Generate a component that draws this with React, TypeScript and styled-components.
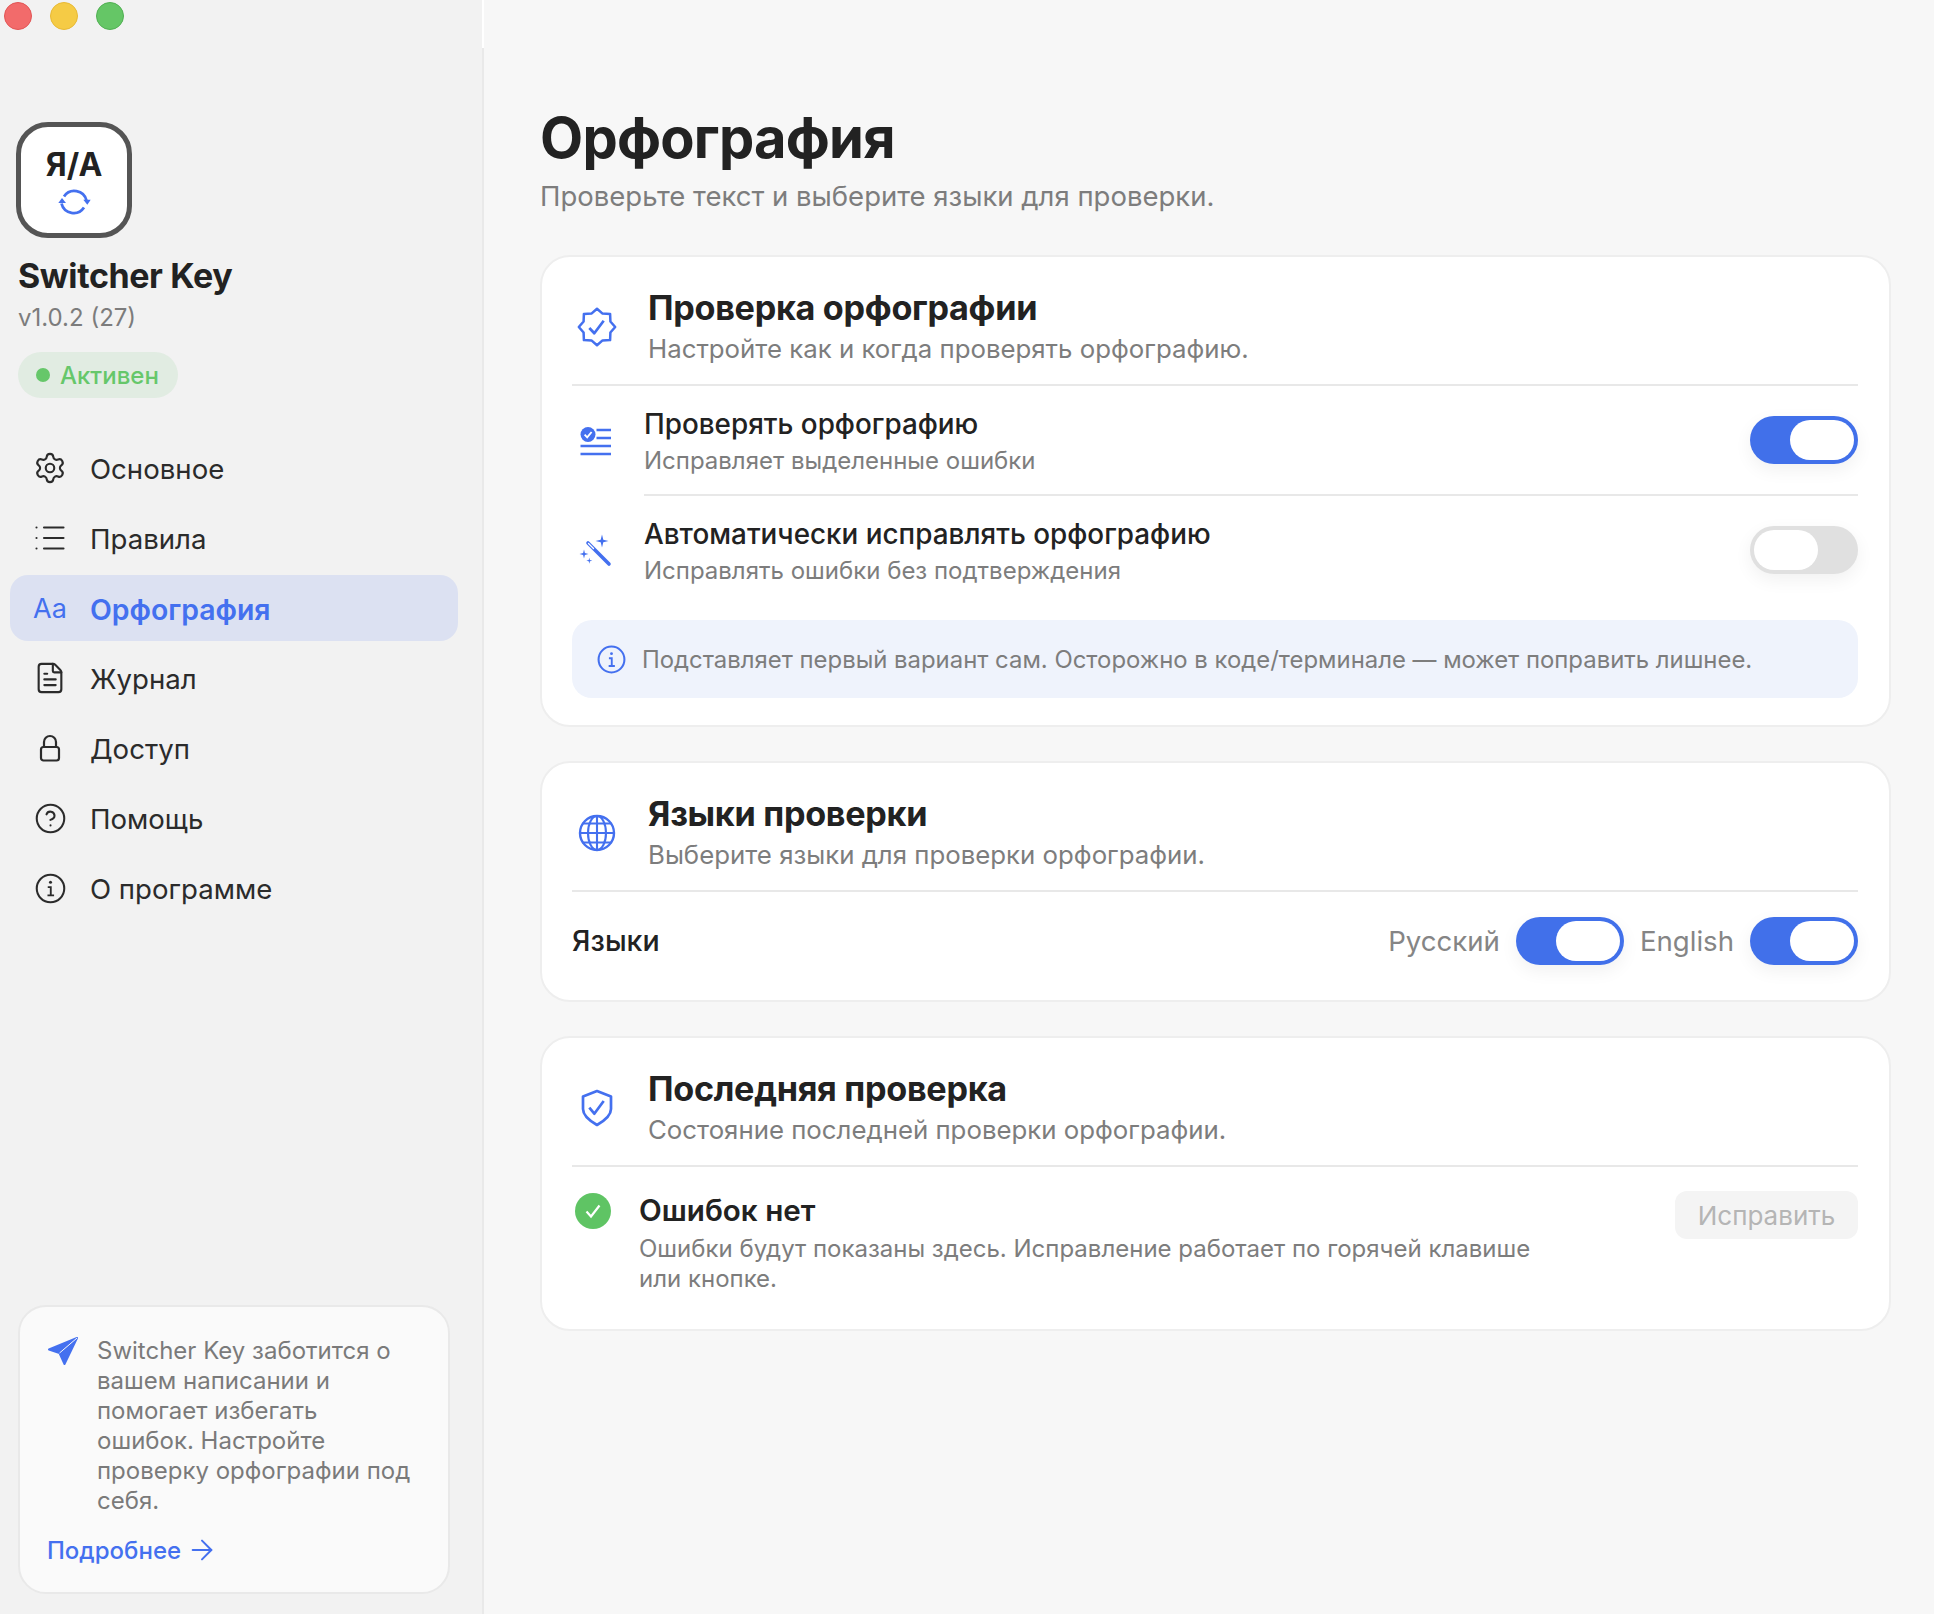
import { FC, ReactNode } from 'react'
import styled, { createGlobalStyle } from 'styled-components'
import { ArrowRight, CircleHelp, FileText, List, Settings } from 'lucide-react'

const BLUE = '#4470ef'
const FONT = 'Inter, "Noto Sans", "Liberation Sans", sans-serif'

const GlobalStyle = createGlobalStyle`
  html, body {
    margin: 0;
    padding: 0;
    background: #f7f7f7;
  }
  * {
    box-sizing: border-box;
  }
`

const SyncIcon = () => (
  <svg width="34" height="30" viewBox="0 0 34 30" fill="none">
    <path d="M7 9.500A12.500 12.500 0 0 1 29.500 13.500" stroke={BLUE} strokeWidth="2.8" />
    <path d="M27 20.500A12.500 12.500 0 0 1 4.500 16.500" stroke={BLUE} strokeWidth="2.8" />
    <path d="M33.700 12.700 30.300 17.700 26.300 12.700z" fill={BLUE} />
    <path d="M1.300 16 5 11 9 16z" fill={BLUE} />
  </svg>
)

const PlaneIcon = () => (
  <svg width="32" height="30" viewBox="0 0 32 30">
    <path
      d="M30 2 2 13.500 12.500 17 17.500 28z"
      fill={BLUE}
      stroke={BLUE}
      strokeWidth="2"
      strokeLinejoin="round"
    />
    <path d="M30 2 12.500 17" stroke="#fafafa" strokeWidth="1" />
  </svg>
)

const CheckListIcon = () => (
  <svg width="36" height="36" viewBox="0 0 36 36" fill="none">
    <circle cx="9" cy="11.500" r="7.500" fill={BLUE} />
    <path d="M5.600 11.700 8.200 14.300 12.600 9" stroke="#fff" strokeWidth="1.900" />
    <path d="M17.500 7H32M17.500 15H32M1.500 23H32M1.500 31H32" stroke={BLUE} strokeWidth="2.400" />
  </svg>
)

const WandIcon = () => (
  <svg width="36" height="36" viewBox="0 0 36 36" fill="none">
    <path d="M9 10 30 31" stroke={BLUE} strokeWidth="3.600" strokeLinecap="round" />
    <path d="M9.500 10.500 14.500 15.500" stroke="#fff" strokeWidth="1.300" strokeLinecap="round" />
    <path d="M23 1.500 24.300 6.700 29.500 8 24.300 9.300 23 14.500 21.700 9.300 16.500 8 21.700 6.700z" fill={BLUE} />
    <path d="M5 16.500 5.900 20.100 9.500 21 5.900 21.900 5 25.500 4.100 21.900.5 21 4.100 20.100z" fill={BLUE} />
    <path d="M10.300 24.700l.6 2.400 2.400.6-2.400.6-.6 2.400-.6-2.400-2.400-.6 2.400-.6z" fill={BLUE} />
  </svg>
)

const GlobeIcon = () => (
  <svg width="40" height="40" viewBox="0 0 40 40" fill="none" stroke={BLUE} strokeWidth="2.100">
    <circle cx="20" cy="20" r="17" strokeWidth="2.400" />
    <ellipse cx="20" cy="20" rx="9" ry="17" />
    <path d="M20 3v34M3 20h34M5.500 10.500h29M5.500 29.500h29" />
  </svg>
)

const BadgeIcon = () => (
  <svg width="40" height="40" viewBox="0 0 40 40" fill="none" stroke={BLUE} strokeWidth="2.500" strokeLinejoin="round">
    <path d="M20 1.800 25.550 6.600 33.100 6.900 33.400 14.450 38.200 20 33.400 25.550 33.100 33.100 25.550 33.400 20 38.200 14.450 33.400 6.900 33.100 6.600 25.550 1.800 20 6.600 14.450 6.900 6.900 14.450 6.600z" />
    <path d="M12.300 21 17.300 26.300 26.700 13.700" strokeWidth="2.700" />
  </svg>
)

const ShieldIcon = () => (
  <svg width="34" height="38" viewBox="0 0 34 38" fill="none" stroke={BLUE} strokeWidth="2.700" strokeLinejoin="round">
    <path d="M17 2 31 7.500V20C31 27 24 32 17 36 10 32 3 27 3 20V7.500z" />
    <path d="M9.300 18.700 14.300 24.700 23.700 12" />
  </svg>
)

const LockIcon = () => (
  <svg width="30" height="30" viewBox="0 0 30 30" fill="none" stroke="currentColor" strokeWidth="2.200">
    <rect x="6" y="14" width="18" height="13.500" rx="2.500" />
    <path d="M9 14V9a6 6 0 0 1 12 0v5" />
  </svg>
)

const InfoIcon: FC<{ size: number; strokeWidth?: number }> = ({ size, strokeWidth = 1.6 }) => (
  <svg width={size} height={size} viewBox="0 0 24 24" fill="none" stroke="currentColor" strokeWidth={strokeWidth}>
    <circle cx="12" cy="12" r="10" />
    <path d="M10 11h2.200v6M9.800 17h4.800" strokeWidth={strokeWidth * 0.9} />
    <circle cx="12" cy="7.500" r="1.100" fill="currentColor" stroke="none" />
  </svg>
)

const Switch: FC<{ on?: boolean }> = ({ on }) => (
  <Track $on={on}>
    <Knob />
  </Track>
)

const CardHeader: FC<{ icon: ReactNode; title: string; subtitle: string }> = ({
  icon,
  title,
  subtitle,
}) => (
  <HeaderRow>
    <IconSlot>{icon}</IconSlot>
    <div>
      <CardTitle>{title}</CardTitle>
      <Muted>{subtitle}</Muted>
    </div>
  </HeaderRow>
)

const App: FC = () => {
  const navItems = [
    { label: 'Основное', icon: <Settings size={34} strokeWidth={1.5} /> },
    { label: 'Правила', icon: <List size={36} strokeWidth={1.4} /> },
    { label: 'Орфография', icon: <AaMark>Aa</AaMark>, active: true },
    { label: 'Журнал', icon: <FileText size={34} strokeWidth={1.5} /> },
    { label: 'Доступ', icon: <LockIcon /> },
    { label: 'Помощь', icon: <CircleHelp size={33} strokeWidth={1.5} /> },
    { label: 'О программе', icon: <InfoIcon size={33} strokeWidth={1.5} /> },
  ]

  return (
    <>
      <GlobalStyle />
      <Layout>
        <Sidebar>
          <TrafficLights>
            <Light $color="#f26b6b" $edge="#e25555" />
            <Light $color="#f5cb45" $edge="#e8b934" />
            <Light $color="#65c666" $edge="#50b052" />
          </TrafficLights>
          <Brand>
            <AppIcon>
              <LogoText>Я/А</LogoText>
              <SyncIcon />
            </AppIcon>
            <AppName>Switcher Key</AppName>
            <Version>v1.0.2 (27)</Version>
            <StatusBadge>
              <StatusDot />
              Активен
            </StatusBadge>
          </Brand>
          <Nav>
            {navItems.map(item => (
              <NavItem key={item.label} $active={item.active}>
                <NavIcon>{item.icon}</NavIcon>
                {item.label}
              </NavItem>
            ))}
          </Nav>
          <Promo>
            <PlaneSlot>
              <PlaneIcon />
            </PlaneSlot>
            <div>
              <PromoText>
                Switcher Key заботится о вашем написании и помогает избегать
                ошибок. Настройте проверку орфографии под себя.
              </PromoText>
              <PromoLink>
                Подробнее <ArrowRight size={32} strokeWidth={1.5} />
              </PromoLink>
            </div>
          </Promo>
        </Sidebar>

        <Main>
          <PageTitle>Орфография</PageTitle>
          <PageSubtitle>Проверьте текст и выберите языки для проверки.</PageSubtitle>

          <Card>
            <CardHeader
              icon={<BadgeIcon />}
              title="Проверка орфографии"
              subtitle="Настройте как и когда проверять орфографию."
            />
            <SettingRow>
              <IconSlot>
                <CheckListIcon />
              </IconSlot>
              <SettingBody $divider>
                <SettingText>
                  <SettingTitle>Проверять орфографию</SettingTitle>
                  <SettingHint>Исправляет выделенные ошибки</SettingHint>
                </SettingText>
                <Switch on />
              </SettingBody>
            </SettingRow>
            <SettingRow>
              <IconSlot>
                <WandIcon />
              </IconSlot>
              <SettingBody>
                <SettingText>
                  <SettingTitle>Автоматически исправлять орфографию</SettingTitle>
                  <SettingHint>Исправлять ошибки без подтверждения</SettingHint>
                </SettingText>
                <Switch />
              </SettingBody>
            </SettingRow>
            <Notice>
              <NoticeIcon>
                <InfoIcon size={31} strokeWidth={1.6} />
              </NoticeIcon>
              Подставляет первый вариант сам. Осторожно в коде/терминале — может поправить лишнее.
            </Notice>
          </Card>

          <Card>
            <CardHeader
              icon={<GlobeIcon />}
              title="Языки проверки"
              subtitle="Выберите языки для проверки орфографии."
            />
            <LanguagesRow>
              <LanguagesLabel>Языки</LanguagesLabel>
              <LanguageToggles>
                <LanguageName>Русский</LanguageName>
                <Switch on />
                <LanguageName>English</LanguageName>
                <Switch on />
              </LanguageToggles>
            </LanguagesRow>
          </Card>

          <Card>
            <CardHeader
              icon={<ShieldIcon />}
              title="Последняя проверка"
              subtitle="Состояние последней проверки орфографии."
            />
            <ResultRow>
              <SuccessDot>
                <svg width="20" height="20" viewBox="0 0 20 20" fill="none">
                  <path d="M3.500 10.500 8 15.500 16.500 4.500" stroke="#fff" strokeWidth="2.200" />
                </svg>
              </SuccessDot>
              <ResultBody>
                <ResultTitle>Ошибок нет</ResultTitle>
                <SettingHint>
                  Ошибки будут показаны здесь. Исправление работает по горячей клавише
                  или кнопке.
                </SettingHint>
              </ResultBody>
              <FixButton>Исправить</FixButton>
            </ResultRow>
          </Card>
        </Main>
      </Layout>
    </>
  )
}

const Layout = styled('div')`
  display: flex;
  height: 1614px;
  overflow: hidden;
  font-family: ${FONT};
  color: #222;
`

const Sidebar = styled('aside')`
  position: relative;
  display: flex;
  flex-direction: column;
  width: 484px;
  flex-shrink: 0;
  background: #f2f2f2;
  border-right: 2px solid #e9e9e9;

  &::after {
    content: '';
    position: absolute;
    top: 0;
    right: -2px;
    width: 2px;
    height: 48px;
    background: #fff;
  }
`

const TrafficLights = styled('div')`
  display: flex;
  gap: 18px;
  padding: 2px 0 0 4px;
`

const Light = styled('span')<{ $color: string; $edge: string }>`
  width: 28px;
  height: 28px;
  border-radius: 50%;
  background: ${p => p.$color};
  border: 1px solid ${p => p.$edge};
`

const Brand = styled('div')`
  display: flex;
  flex-direction: column;
  align-items: flex-start;
  padding: 92px 0 0 18px;
`

const AppIcon = styled('div')`
  display: flex;
  flex-direction: column;
  align-items: center;
  width: 116px;
  height: 116px;
  margin-left: -2px;
  padding-top: 20px;
  background: #fff;
  border: 5px solid #555;
  border-radius: 32px;
`

const LogoText = styled('div')`
  font-size: 32px;
  line-height: 36px;
  font-weight: 700;
  color: #222;
  margin-bottom: 4px;
`

const AppName = styled('div')`
  margin-top: 18px;
  font-size: 34px;
  line-height: 40px;
  font-weight: 700;
  letter-spacing: -0.4px;
  color: #222;
`

const Version = styled('div')`
  margin-top: 7px;
  font-size: 24px;
  line-height: 30px;
  color: #7c7c7c;
`

const StatusBadge = styled('div')`
  display: flex;
  align-items: center;
  gap: 10px;
  height: 46px;
  margin-top: 19px;
  padding: 0 19px 0 18px;
  border-radius: 23px;
  background: #e1ece2;
  color: #66c76a;
  font-size: 24px;
  font-weight: 500;
`

const StatusDot = styled('span')`
  width: 14px;
  height: 14px;
  border-radius: 50%;
  background: #66c76a;
`

const Nav = styled('nav')`
  display: flex;
  flex-direction: column;
  gap: 4px;
  margin: 37px 24px 0 10px;
`

const NavItem = styled('div')<{ $active?: boolean }>`
  display: flex;
  align-items: center;
  gap: 20px;
  height: 66px;
  padding: 2px 0 0 20px;
  border-radius: 18px;
  font-size: ${p => (p.$active ? 28.4 : 27.6)}px;
  font-weight: ${p => (p.$active ? 600 : 400)};
  color: ${p => (p.$active ? BLUE : '#2b2b2b')};
  background: ${p => (p.$active ? '#dce1f2' : 'transparent')};
`

const NavIcon = styled('span')`
  display: flex;
  align-items: center;
  justify-content: center;
  width: 40px;
  margin-top: -2px;
`

const AaMark = styled('span')`
  font-size: 27px;
  font-weight: 400;
`

const Promo = styled('div')`
  display: flex;
  margin: auto 32px 20px 18px;
  padding: 29px 26px 27px 27px;
  background: #fafafa;
  border: 2px solid #e9e9e9;
  border-radius: 28px;
`

const PlaneSlot = styled('div')`
  width: 50px;
  flex-shrink: 0;
`

const PromoText = styled('div')`
  max-width: 322px;
  font-size: 24px;
  line-height: 30px;
  color: #7a7a7a;
`

const PromoLink = styled('a')`
  display: flex;
  align-items: center;
  gap: 5px;
  height: 30px;
  margin: 19px 0 0 -50px;
  font-size: 24px;
  font-weight: 500;
  color: ${BLUE};
`

const Main = styled('main')`
  flex: 1;
  min-width: 0;
  padding: 104px 43px 0 56px;
  background: #f7f7f7;
`

const PageTitle = styled('h1')`
  margin: 0;
  font-size: 56px;
  line-height: 68px;
  font-weight: 700;
  letter-spacing: -0.75px;
  color: #222;
`

const PageSubtitle = styled('div')`
  margin: 7px 0 42px;
  font-size: 27.5px;
  line-height: 34px;
  color: #7d7d7d;
`

const Card = styled('section')`
  margin-bottom: 34px;
  padding: 31px 31px 27px 30px;
  background: #fff;
  border: 2px solid #eee;
  border-radius: 30px;
`

const HeaderRow = styled('div')`
  display: flex;
  align-items: center;
  gap: 26px;
  padding-bottom: 18px;
  border-bottom: 2px solid #e8e8e8;
`

const IconSlot = styled('div')`
  display: flex;
  align-items: center;
  justify-content: center;
  width: 50px;
  flex-shrink: 0;
`

const CardTitle = styled('h2')`
  margin: 0 0 4px;
  font-size: 34.2px;
  line-height: 40px;
  font-weight: 700;
  letter-spacing: -0.3px;
  color: #222;
`

const Muted = styled('div')`
  font-size: 25.8px;
  line-height: 34px;
  color: #7d7d7d;
`

const SettingRow = styled('div')`
  display: flex;
  align-items: center;
  gap: 22px;
`

const SettingBody = styled('div')<{ $divider?: boolean }>`
  flex: 1;
  display: flex;
  align-items: center;
  justify-content: space-between;
  height: 110px;
  border-bottom: 2px solid ${p => (p.$divider ? '#e8e8e8' : 'transparent')};
`

const SettingText = styled('div')`
  padding-top: 2px;
`

const SettingTitle = styled('div')`
  font-size: 27.85px;
  line-height: 36px;
  font-weight: 500;
  color: #222;
`

const SettingHint = styled('div')`
  margin-top: 4px;
  font-size: 24px;
  line-height: 30px;
  color: #7d7d7d;
`

const Track = styled('div')<{ $on?: boolean }>`
  display: flex;
  justify-content: ${p => (p.$on ? 'flex-end' : 'flex-start')};
  align-items: center;
  width: 108px;
  height: 48px;
  padding: 0 4px;
  border-radius: 24px;
  background: ${p => (p.$on ? '#4170ea' : '#e0e0e0')};
  box-shadow: 0 6px 18px rgba(0, 0, 0, 0.06);
`

const Knob = styled('span')`
  width: 64px;
  height: 40px;
  border-radius: 20px;
  background: #fff;
`

const Notice = styled('div')`
  display: flex;
  align-items: center;
  gap: 15px;
  height: 78px;
  margin-top: 14px;
  padding-left: 24px;
  border-radius: 20px;
  background: #eff3fc;
  font-size: 23.9px;
  color: #7d7d7d;
`

const NoticeIcon = styled('span')`
  display: flex;
  color: ${BLUE};
`

const LanguagesRow = styled('div')`
  display: flex;
  align-items: center;
  justify-content: space-between;
  height: 98px;
  margin-bottom: -17px;
`

const LanguagesLabel = styled('div')`
  font-size: 28.6px;
  line-height: 36px;
  font-weight: 500;
  color: #222;
`

const LanguageToggles = styled('div')`
  display: flex;
  align-items: center;
  gap: 16px;
`

const LanguageName = styled('span')`
  font-size: 27.6px;
  color: #858585;
`

const ResultRow = styled('div')`
  display: flex;
  align-items: flex-start;
  padding-top: 24px;
  padding-bottom: 8px;
`

const SuccessDot = styled('div')`
  display: flex;
  align-items: center;
  justify-content: center;
  width: 36px;
  height: 36px;
  margin: 2px 28px 0 3px;
  border-radius: 50%;
  background: #5fc464;
  flex-shrink: 0;
`

const ResultBody = styled('div')`
  flex: 1;
  max-width: 910px;
  margin-right: auto;
`

const ResultTitle = styled('div')`
  margin: -1px 0 2px;
  font-size: 29.6px;
  line-height: 40px;
  font-weight: 600;
  color: #222;
`

const FixButton = styled('div')`
  display: flex;
  align-items: center;
  justify-content: center;
  width: 183px;
  height: 48px;
  border-radius: 12px;
  background: #f4f4f4;
  font-size: 26px;
  color: #b5b5b5;
`

export default App
